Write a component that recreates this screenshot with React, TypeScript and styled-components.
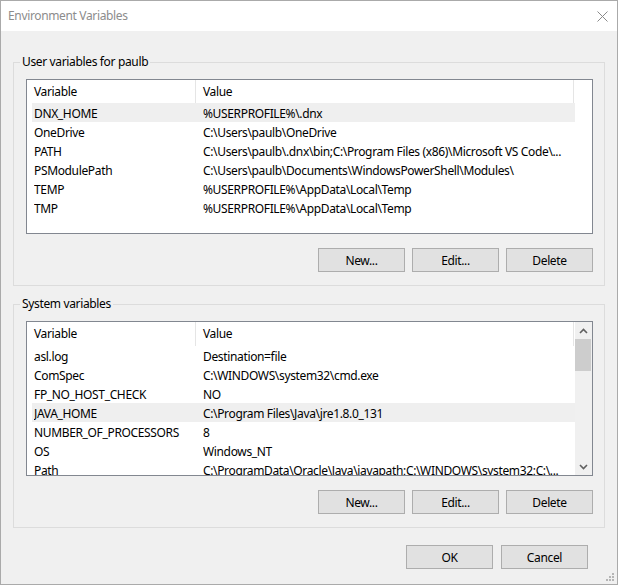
import React from 'react'
import styled, { createGlobalStyle } from 'styled-components'

const GlobalStyle = createGlobalStyle`
  html, body {
    margin: 0;
    padding: 0;
    background: #ffffff;
  }

  * {
    box-sizing: border-box;
  }
`

const uiFont = `'Noto Sans', 'Open Sans', sans-serif`

const Window = styled.div`
  position: relative;
  width: 618px;
  height: 585px;
  display: flex;
  flex-direction: column;
  border: 1px solid #aaaaaa;
  background: #f0f0f0;
  font-family: ${uiFont};
  font-size: 12px;
  letter-spacing: -0.35px;
  color: #000000;
`

const TitleBar = styled.div`
  height: 30px;
  flex: none;
  display: flex;
  align-items: center;
  justify-content: space-between;
  padding: 0 8px 0 7px;
  background: #ffffff;
`

const Title = styled.span`
  color: #8c8c8c;
  font-size: 12px;
  line-height: 16px;
`

const CloseButton = styled.div`
  width: 13px;
  height: 13px;
  display: flex;
`

const Body = styled.div`
  flex: 1;
  display: flex;
  flex-direction: column;
  padding: 23px 12px 0 12px;
`

const Group = styled.fieldset<{ $spaced?: boolean }>`
  margin: ${({ $spaced }) => ($spaced ? '10px' : '0')} 0 0 0;
  padding: 0;
  border: 1px solid #dcdcdc;
  min-width: 0;
`

const Legend = styled.legend`
  margin-left: 6px;
  padding: 0 2px;
  line-height: 16px;
  font-size: 12px;
`

const GroupContent = styled.div`
  padding: 9px 11px 13px 12px;
  display: flex;
  flex-direction: column;
`

const ListBox = styled.div`
  height: 155px;
  display: flex;
  border: 1px solid #828790;
  background: #ffffff;
  overflow: hidden;
`

const ListBody = styled.div`
  flex: 1;
  min-width: 0;
  display: flex;
  flex-direction: column;
`

const HeaderRow = styled.div<{ $height: number }>`
  display: flex;
  height: ${({ $height }) => $height}px;
  flex: none;
`

const HeaderCell = styled.div<{ $width: number }>`
  width: ${({ $width }) => $width}px;
  flex: none;
  padding: 2px 0 0 7px;
  line-height: 20px;
  border-right: 1px solid #e5e5e5;
  white-space: nowrap;
`

const Row = styled.div<{ $hot?: boolean }>`
  width: 543px;
  height: 19px;
  margin-left: 5px;
  flex: none;
  display: grid;
  grid-template-columns: 169px 1fr;
  padding: 2px 4px 0 2px;
  line-height: 17px;
  background: ${({ $hot }) => ($hot ? '#efefef' : 'transparent')};
`

const Cell = styled.div`
  white-space: nowrap;
  overflow: hidden;
`

const ScrollBar = styled.div`
  width: 17px;
  flex: none;
  display: flex;
  flex-direction: column;
  background: #f0f0f0;
`

const ScrollArrow = styled.div`
  height: 17px;
  flex: none;
  display: flex;
  align-items: center;
  justify-content: center;
`

const ScrollTrack = styled.div`
  flex: 1;
  padding-right: 1px;
`

const ScrollThumb = styled.div`
  height: 32px;
  background: #cdcdcd;
`

const ButtonRow = styled.div<{ $footer?: boolean }>`
  display: flex;
  justify-content: flex-end;
  gap: ${({ $footer }) => ($footer ? '8px' : '7px')};
  margin-top: ${({ $footer }) => ($footer ? '17px' : '14px')};
  margin-right: ${({ $footer }) => ($footer ? '17px' : '0')};
`

const Button = styled.button`
  width: 87px;
  height: 24px;
  padding: 0;
  border: 1px solid #adadad;
  background: #e1e1e1;
  font-family: ${uiFont};
  font-size: 12px;
  letter-spacing: -0.35px;
  color: #000000;
`

const Grip = styled.svg`
  position: absolute;
  right: 2px;
  bottom: 2px;
`

type Variable = { name: string; value: string; hot?: boolean }

const userVariables: Variable[] = [
  { name: 'DNX_HOME', value: '%USERPROFILE%\\.dnx', hot: true },
  { name: 'OneDrive', value: 'C:\\Users\\paulb\\OneDrive' },
  { name: 'PATH', value: 'C:\\Users\\paulb\\.dnx\\bin;C:\\Program Files (x86)\\Microsoft VS Code\\...' },
  { name: 'PSModulePath', value: 'C:\\Users\\paulb\\Documents\\WindowsPowerShell\\Modules\\' },
  { name: 'TEMP', value: '%USERPROFILE%\\AppData\\Local\\Temp' },
  { name: 'TMP', value: '%USERPROFILE%\\AppData\\Local\\Temp' },
]

const systemVariables: Variable[] = [
  { name: 'asl.log', value: 'Destination=file' },
  { name: 'ComSpec', value: 'C:\\WINDOWS\\system32\\cmd.exe' },
  { name: 'FP_NO_HOST_CHECK', value: 'NO' },
  { name: 'JAVA_HOME', value: 'C:\\Program Files\\Java\\jre1.8.0_131', hot: true },
  { name: 'NUMBER_OF_PROCESSORS', value: '8' },
  { name: 'OS', value: 'Windows_NT' },
  { name: 'Path', value: 'C:\\ProgramData\\Oracle\\Java\\javapath;C:\\WINDOWS\\system32;C:\\...' },
]

const Chevron = ({ up }: { up: boolean }) => (
  <svg width='9' height='6' viewBox='0 0 9 6'>
    <polyline
      points={up ? '1,5 4.5,1.5 8,5' : '1,1 4.5,4.5 8,1'}
      fill='none'
      stroke='#606060'
      strokeWidth='1.6'
    />
  </svg>
)

const VariableList = ({ rows, scroll }: { rows: Variable[]; scroll?: boolean }) => (
  <ListBox>
    <ListBody>
      <HeaderRow $height={scroll ? 24 : 23}>
        <HeaderCell $width={169}>Variable</HeaderCell>
        <HeaderCell $width={378}>Value</HeaderCell>
      </HeaderRow>
      {rows.map((row) => (
        <Row key={row.name} $hot={row.hot}>
          <Cell>{row.name}</Cell>
          <Cell>{row.value}</Cell>
        </Row>
      ))}
    </ListBody>
    {scroll && (
      <ScrollBar>
        <ScrollArrow><Chevron up /></ScrollArrow>
        <ScrollTrack>
          <ScrollThumb />
        </ScrollTrack>
        <ScrollArrow><Chevron up={false} /></ScrollArrow>
      </ScrollBar>
    )}
  </ListBox>
)

const VariableGroup = ({ label, rows, scroll, spaced }: {
  label: string
  rows: Variable[]
  scroll?: boolean
  spaced?: boolean
}) => (
  <Group $spaced={spaced}>
    <Legend>{label}</Legend>
    <GroupContent>
      <VariableList rows={rows} scroll={scroll} />
      <ButtonRow>
        <Button>New...</Button>
        <Button>Edit...</Button>
        <Button>Delete</Button>
      </ButtonRow>
    </GroupContent>
  </Group>
)

const App = (): JSX.Element => {
  return (
    <>
      <GlobalStyle />
      <Window>
        <TitleBar>
          <Title>Environment Variables</Title>
          <CloseButton>
            <svg width='13' height='13' viewBox='0 0 13 13'>
              <path d='M1.5 1.5 L11.5 11.5 M11.5 1.5 L1.5 11.5' stroke='#8a8a8a' strokeWidth='1' />
            </svg>
          </CloseButton>
        </TitleBar>
        <Body>
          <VariableGroup label='User variables for paulb' rows={userVariables} />
          <VariableGroup label='System variables' rows={systemVariables} scroll spaced />
          <ButtonRow $footer>
            <Button>OK</Button>
            <Button>Cancel</Button>
          </ButtonRow>
        </Body>
        <Grip width='10' height='10' viewBox='0 0 10 10'>
          <rect x='7' y='1' width='2' height='2' fill='#b5b5b5' />
          <rect x='4' y='4' width='2' height='2' fill='#b5b5b5' />
          <rect x='7' y='4' width='2' height='2' fill='#b5b5b5' />
          <rect x='1' y='7' width='2' height='2' fill='#b5b5b5' />
          <rect x='4' y='7' width='2' height='2' fill='#b5b5b5' />
          <rect x='7' y='7' width='2' height='2' fill='#b5b5b5' />
        </Grip>
      </Window>
    </>
  )
}

export default App
